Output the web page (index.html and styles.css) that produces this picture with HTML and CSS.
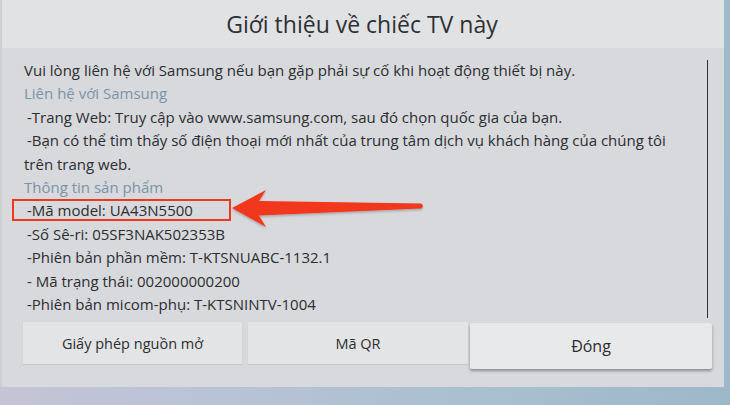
FILE: index.html
```html
<!DOCTYPE html>
<html lang="vi">
<head>
<meta charset="utf-8">
<title>Giới thiệu về chiếc TV này</title>
<link rel="stylesheet" href="styles.css">
</head>
<body>
<div class="panel">
  <div class="title">Giới thiệu về chiếc TV này</div>
  <div class="content">
    <div class="text">
      <div class="line">Vui lòng liên hệ với Samsung nếu bạn gặp phải sự cố khi hoạt động thiết bị này.</div>
      <div class="line head">Liên hệ với Samsung</div>
      <div class="line ind">-Trang Web: Truy cập vào www.samsung.com, sau đó chọn quốc gia của bạn.</div>
      <div class="line ind">-Bạn có thể tìm thấy số điện thoại mới nhất của trung tâm dịch vụ khách hàng của chúng tôi</div>
      <div class="line">trên trang web.</div>
      <div class="line head">Thông tin sản phẩm</div>
      <div class="line ind">-Mã model: UA43N5500</div>
      <div class="line ind">-Số Sê-ri: 05SF3NAK502353B</div>
      <div class="line ind">-Phiên bản phần mềm: T-KTSNUABC-1132.1</div>
      <div class="line ind">- Mã trạng thái: 002000000200</div>
      <div class="line ind">-Phiên bản micom-phụ: T-KTSNINTV-1004</div>
    </div>
    <div class="scrollbar"></div>
  </div>
  <div class="buttons">
    <div class="btn b1">Giấy phép nguồn mở</div>
    <div class="btn b2">Mã QR</div>
    <div class="btn focused">Đóng</div>
  </div>
</div>
<div class="annot-box"></div>
<svg class="arrow" width="730" height="405" viewBox="0 0 730 405">
  <defs>
    <filter id="sh" x="-10%" y="-50%" width="120%" height="200%">
      <feDropShadow dx="0" dy="1.5" stdDeviation="1.2" flood-color="#000" flood-opacity="0.25"/>
    </filter>
  </defs>
  <path d="M232 208 L266 190 L259 201 L421 203.5 Q425 206 421 208.5 L259 215.5 L266 227 Z" fill="#f2371c" filter="url(#sh)"/>
</svg>
</body>
</html>
```

FILE: styles.css
```css
html, body {
  margin: 0;
  padding: 0;
}
body {
  width: 730px;
  height: 405px;
  overflow: hidden;
  position: relative;
  background: linear-gradient(100deg, #c9c4d6 0%, #b9c3d6 35%, #aac0d0 65%, #9db8c9 100%);
  font-family: "Open Sans", "Noto Sans", sans-serif;
  color: #2c2e31;
}
.panel {
  width: 724px;
  height: 387px;
  background: #d7d9dc;
  display: flex;
  flex-direction: column;
  border-left: 2px solid #cdcfd2;
  box-sizing: border-box;
}
.title {
  height: 48px;
  flex: none;
  background: #e1e2e4;
  text-align: center;
  font-size: 23px;
  line-height: 48px;
  color: #2e3033;
  padding-right: 2px;
}
.content {
  height: 273px;
  flex: none;
  display: flex;
  box-sizing: border-box;
  padding-top: 11px;
}
.text {
  flex: 1;
  padding-left: 22px;
  font-size: 15px;
  line-height: 23.4px;
  white-space: nowrap;
}
.line.head {
  color: #7b93a9;
}
.line.ind {
  padding-left: 3px;
}
.scrollbar {
  width: 1.5px;
  height: 258px;
  margin-top: 1px;
  margin-right: 16px;
  background: #2f3032;
}
.buttons {
  display: flex;
  align-items: flex-start;
  padding-left: 21px;
}
.btn {
  height: 42px;
  margin-top: 1px;
  background: #e3e4e6;
  display: flex;
  align-items: center;
  justify-content: center;
  font-size: 14.5px;
  color: #2c2e31;
  box-shadow: 0 1px 1px rgba(0,0,0,0.08);
}
.b1 {
  width: 219px;
}
.b2 {
  width: 220px;
  margin-left: 6px;
}
.focused {
  width: 242px;
  height: 46px;
  margin-top: 2px;
  margin-left: 2px;
  background: #e8e9eb;
  border-radius: 2px;
  box-shadow: 0 2px 3px rgba(0,0,0,0.35);
  font-size: 16px;
  position: relative;
}
.annot-box {
  position: absolute;
  left: 12px;
  top: 199px;
  width: 215px;
  height: 18px;
  border: 2.5px solid #f0381f;
}
.arrow {
  position: absolute;
  left: 0;
  top: 0;
  pointer-events: none;
}
```
